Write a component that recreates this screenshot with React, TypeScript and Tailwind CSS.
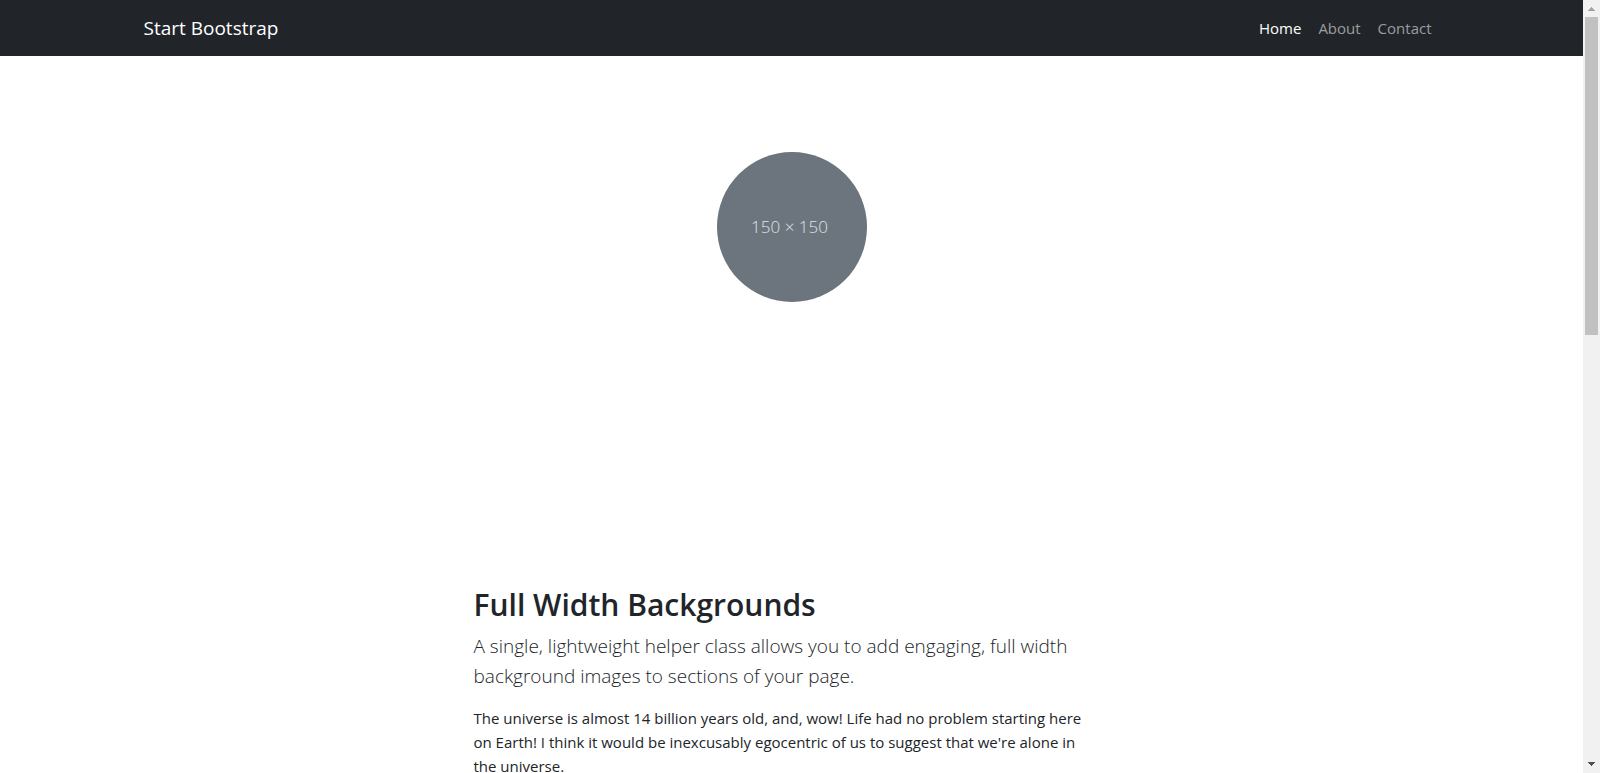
const links = [
  { label: 'Home', active: true },
  { label: 'About', active: false },
  { label: 'Contact', active: false },
];

function Navbar() {
  return (
    <nav className="bg-[#212529]">
      <div className="mx-auto flex h-14 max-w-[1320px] items-center justify-between px-3">
        <a href="#home" className="text-[19px] leading-[30px] text-white">
          Start Bootstrap
        </a>
        <ul className="flex gap-[17px] pr-2 text-[15px] leading-6">
          {links.map((link) => (
            <li key={link.label}>
              <a
                href={'#' + link.label.toLowerCase()}
                aria-current={link.active ? 'page' : undefined}
                className={link.active ? 'text-white' : 'text-[#9b9d9f]'}
              >
                {link.label}
              </a>
            </li>
          ))}
        </ul>
      </div>
    </nav>
  );
}

function ScrollBar() {
  return (
    <div aria-hidden="true" className="flex w-[17px] shrink-0 flex-col items-center bg-[#f1f1f1]">
      <svg className="h-[17px] w-[17px] shrink-0" viewBox="0 0 17 17" shapeRendering="crispEdges" fill="#a3a3a3">
        <path d="M8 7h1v1h1v1h1v1h1v1H5v-1h1V9h1V8h1z" />
      </svg>
      <div className="min-h-0 w-full flex-1 px-[2px]">
        <div className="h-[43%] bg-[#c1c1c1]" />
      </div>
      <svg className="h-[17px] w-[17px] shrink-0" viewBox="0 0 17 17" shapeRendering="crispEdges" fill="#505050">
        <path d="M5 6h7v1h-1v1h-1v1H9v1H8V9H7V8H6V7H5z" />
      </svg>
    </div>
  );
}

export default function App() {
  return (
    <div className="flex h-screen overflow-hidden bg-white font-['Open_Sans','Noto_Sans',sans-serif] text-[#212529]">
      <div className="min-w-0 flex-1 overflow-hidden">
        <Navbar />
        <header className="flex justify-center py-24">
          <div className="flex size-[150px] items-center justify-center rounded-full bg-[#6c757d] pr-1 text-[17px] font-light text-[#dee2e6]">
            150 × 150
          </div>
        </header>
        <section className="pt-[187px] pb-24">
          <div className="mx-auto max-w-[660px] px-3">
            <h2 className="mb-1.5 text-[30px] leading-10 font-semibold">Full Width Backgrounds</h2>
            <p className="mb-[15px] text-[19px] leading-[30px] font-light">
              A single, lightweight helper class allows you to add engaging, full width background images to sections
              of your page.
            </p>
            <p className="max-w-[620px] text-[15px] leading-6">
              The universe is almost 14 billion years old, and, wow! Life had no problem starting here on Earth! I
              think it would be inexcusably egocentric of us to suggest that we're alone in the universe.
            </p>
          </div>
        </section>
      </div>
      <ScrollBar />
    </div>
  );
}
